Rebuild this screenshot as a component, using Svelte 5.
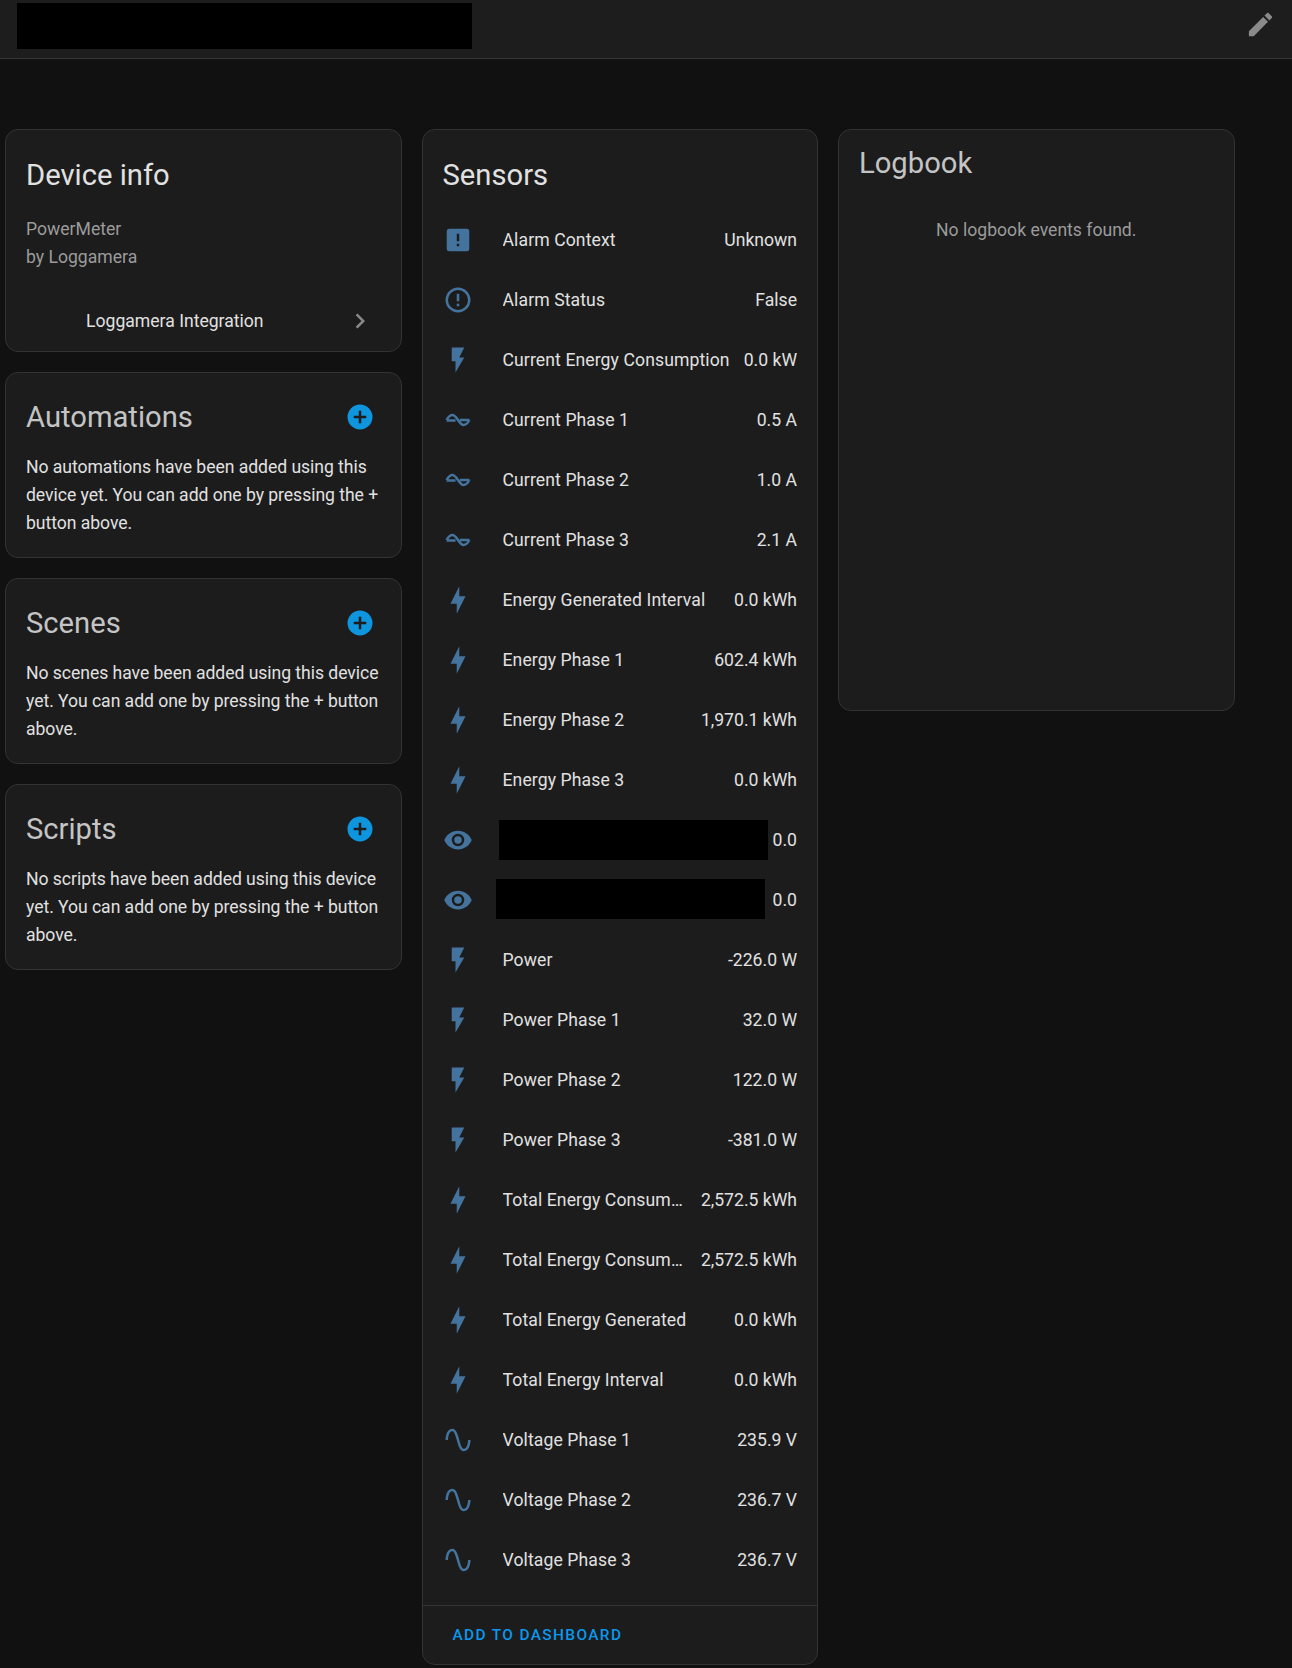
<script>
  const icons = {
    box: 'M5,3H19A2,2 0 0,1 21,5V19A2,2 0 0,1 19,21H5A2,2 0 0,1 3,19V5A2,2 0 0,1 5,3M13,13V7H11V13H13M13,17V15H11V17H13Z',
    alert: 'M11,15H13V17H11V15M11,7H13V13H11V7M12,2C6.47,2 2,6.5 2,12A10,10 0 0,0 12,22A10,10 0 0,0 22,12A10,10 0 0,0 12,2M12,20A8,8 0 0,1 4,12A8,8 0 0,1 12,4A8,8 0 0,1 20,12A8,8 0 0,1 12,20Z',
    flash: 'M7,2V13H10V22L17,10H13L17,2H7Z',
    bolt: 'M11 15H6L13 1V9H18L11 23V15Z',
    ac: 'M2.8 12C4.5 9 6 8 7.6 8C11 8 13 16 16.4 16C18 16 19.5 15 21.2 12M2.8 12.3H10M13.5 12H21.2',
    eye: 'M12,9A3,3 0 0,0 9,12A3,3 0 0,0 12,15A3,3 0 0,0 15,12A3,3 0 0,0 12,9M12,17A5,5 0 0,1 7,12A5,5 0 0,1 12,7A5,5 0 0,1 17,12A5,5 0 0,1 12,17M12,4.5C7,4.5 2.73,7.61 1,12C2.73,16.39 7,19.5 12,19.5C17,19.5 21.27,16.39 23,12C21.27,7.61 17,4.5 12,4.5Z',
    sine: 'M16.5,21C13.5,21 12.31,16.76 11.05,12.28C10.14,9.04 9,5 7.5,5C4.11,5 4,11.93 4,12H2C2,11.63 2.06,3 7.5,3C10.5,3 11.71,7.25 12.97,11.74C13.93,15.14 15,19 16.5,19C19.94,19 20.03,12.07 20.03,12H22.03C22.03,12.37 21.97,21 16.5,21Z',
    plus: 'M17,13H13V17H11V13H7V11H11V7H13V11H17M12,2A10,10 0 0,0 2,12A10,10 0 0,0 12,22A10,10 0 0,0 22,12A10,10 0 0,0 12,2Z',
    pencil: 'M20.71,7.04C21.1,6.65 21.1,6 20.71,5.63L18.37,3.29C18,2.9 17.35,2.9 16.96,3.29L15.12,5.12L18.87,8.87M3,17.25V21H6.75L17.81,9.93L14.06,6.18L3,17.25Z',
    chevron: 'M8.59,16.58L13.17,12L8.59,7.41L10,6L16,12L10,18L8.59,16.58Z'
  };

  const sensors = [
    { icon: 'box', name: 'Alarm Context', value: 'Unknown' },
    { icon: 'alert', name: 'Alarm Status', value: 'False' },
    { icon: 'flash', name: 'Current Energy Consumption', value: '0.0 kW' },
    { icon: 'ac', name: 'Current Phase 1', value: '0.5 A' },
    { icon: 'ac', name: 'Current Phase 2', value: '1.0 A' },
    { icon: 'ac', name: 'Current Phase 3', value: '2.1 A' },
    { icon: 'bolt', name: 'Energy Generated Interval', value: '0.0 kWh' },
    { icon: 'bolt', name: 'Energy Phase 1', value: '602.4 kWh' },
    { icon: 'bolt', name: 'Energy Phase 2', value: '1,970.1 kWh' },
    { icon: 'bolt', name: 'Energy Phase 3', value: '0.0 kWh' },
    { icon: 'eye', redact: 'first', value: '0.0' },
    { icon: 'eye', redact: 'second', value: '0.0' },
    { icon: 'flash', name: 'Power', value: '-226.0 W' },
    { icon: 'flash', name: 'Power Phase 1', value: '32.0 W' },
    { icon: 'flash', name: 'Power Phase 2', value: '122.0 W' },
    { icon: 'flash', name: 'Power Phase 3', value: '-381.0 W' },
    { icon: 'bolt', name: 'Total Energy Consumption Interval', value: '2,572.5 kWh' },
    { icon: 'bolt', name: 'Total Energy Consumption Total', value: '2,572.5 kWh' },
    { icon: 'bolt', name: 'Total Energy Generated', value: '0.0 kWh' },
    { icon: 'bolt', name: 'Total Energy Interval', value: '0.0 kWh' },
    { icon: 'sine', name: 'Voltage Phase 1', value: '235.9 V' },
    { icon: 'sine', name: 'Voltage Phase 2', value: '236.7 V' },
    { icon: 'sine', name: 'Voltage Phase 3', value: '236.7 V' }
  ];

  const related = [
    { title: 'Automations', text: 'No automations have been added using this device yet. You can add one by pressing the + button above.' },
    { title: 'Scenes', text: 'No scenes have been added using this device yet. You can add one by pressing the + button above.' },
    { title: 'Scripts', text: 'No scripts have been added using this device yet. You can add one by pressing the + button above.' }
  ];
</script>

<header class="toolbar">
  <div class="redacted-title"></div>
  <svg class="edit" viewBox="0 0 24 24"><path d={icons.pencil} /></svg>
</header>

<main class="columns">
  <div class="column">
    <section class="card device">
      <h2 class="bright">Device info</h2>
      <div class="model">PowerMeter</div>
      <div class="model">by Loggamera</div>
      <div class="integration">
        <span>Loggamera Integration</span>
        <svg viewBox="0 0 24 24"><path d={icons.chevron} /></svg>
      </div>
    </section>

    {#each related as item (item.title)}
      <section class="card related">
        <div class="related-head">
          <h2>{item.title}</h2>
          <svg viewBox="0 0 24 24"><path d={icons.plus} /></svg>
        </div>
        <p>{item.text}</p>
      </section>
    {/each}
  </div>

  <div class="column">
    <section class="card sensors">
      <h2 class="bright">Sensors</h2>
      <div class="rows">
        {#each sensors as row, i (i)}
          <div class="row">
            <svg class="state-icon" viewBox="0 0 24 24">
              <path class:wave={row.icon === 'ac'} d={icons[row.icon]} />
            </svg>
            {#if row.redact}
              <div class="name masked"><div class="redacted {row.redact}"></div></div>
            {:else}
              <div class="name">{row.name}</div>
            {/if}
            <div class="value" class:tight={row.redact}>{row.value}</div>
          </div>
        {/each}
      </div>
      <div class="actions">ADD TO DASHBOARD</div>
    </section>
  </div>

  <div class="column">
    <section class="card logbook">
      <h2>Logbook</h2>
      <div class="empty">No logbook events found.</div>
    </section>
  </div>
</main>

<style>
  :global(body) {
    background: #111111;
    font-family: Roboto, "Liberation Sans", sans-serif;
    color: #e1e1e1;
  }

  .toolbar {
    box-sizing: border-box;
    height: 59px;
    padding: 3px 16px 0 17px;
    display: flex;
    justify-content: space-between;
    background: #1d1d1d;
    border-bottom: 1px solid #373737;
  }

  .redacted-title {
    width: 455px;
    height: 46px;
    background: #000;
  }

  .edit {
    width: 31px;
    height: 31px;
    margin-top: 6px;
    fill: #8a8a8a;
  }

  .columns {
    display: grid;
    grid-template-columns: repeat(3, 396.5px);
    column-gap: 20px;
    padding: 70px 0 0 5px;
    align-items: start;
  }

  .column {
    display: flex;
    flex-direction: column;
    gap: 20px;
  }

  .card {
    box-sizing: border-box;
    background: #1c1c1c;
    border: 1px solid #333333;
    border-radius: 13px;
  }

  h2 {
    margin: 0;
    font-size: 29.2px;
    font-weight: 400;
    line-height: 36px;
    color: #c4c4c4;
  }

  h2.bright {
    color: #e1e1e1;
  }

  .device {
    height: 223px;
    padding: 27px 20px 0;
  }

  .device h2 {
    margin-bottom: 22px;
  }

  .model {
    font-size: 17.6px;
    line-height: 28px;
    color: #9b9b9b;
  }

  .integration {
    display: flex;
    align-items: center;
    justify-content: space-between;
    margin-top: 35px;
    padding: 0 6px 0 60px;
    font-size: 17.6px;
    line-height: 30px;
    color: #e1e1e1;
  }

  .integration svg {
    width: 30px;
    height: 30px;
    fill: #8a8a8a;
  }

  .related {
    height: 186px;
    padding: 26px 20px 0;
  }

  .related-head {
    display: flex;
    align-items: center;
    justify-content: space-between;
    padding-right: 6px;
  }

  .related-head svg {
    width: 30px;
    height: 30px;
    fill: #0f95dd;
  }

  .related p {
    margin: 18px 0 0;
    font-size: 17.6px;
    line-height: 28px;
    letter-spacing: -0.05px;
    color: #e1e1e1;
  }

  .sensors h2 {
    padding: 27px 20px 17px;
  }

  .rows {
    padding-bottom: 15px;
  }

  .row {
    display: flex;
    align-items: center;
    height: 60px;
    padding: 0 20px;
    font-size: 17.6px;
  }

  .state-icon {
    width: 30px;
    height: 30px;
    flex: none;
    margin-right: 30px;
    fill: #44739e;
  }

  .wave {
    fill: none;
    stroke: #44739e;
    stroke-width: 2;
  }

  .name {
    flex: 1;
    min-width: 0;
    overflow: hidden;
    white-space: nowrap;
    text-overflow: ellipsis;
    letter-spacing: 0.1px;
    color: #e1e1e1;
  }

  .name.masked {
    overflow: visible;
  }

  .value {
    flex: none;
    margin-left: 12px;
    text-align: right;
    color: #e1e1e1;
  }

  .value.tight {
    margin-left: 6px;
  }

  .redacted {
    height: 40px;
    background: #000;
  }

  .redacted.first {
    width: 268.6px;
    margin-left: -3.5px;
  }

  .redacted.second {
    width: 269.7px;
    margin-top: -2px;
    margin-left: -7px;
  }

  .actions {
    height: 58px;
    padding-left: 30px;
    border-top: 1px solid #333333;
    font-size: 15.4px;
    font-weight: 500;
    letter-spacing: 1.375px;
    line-height: 58px;
    color: #0a98ee;
  }

  .logbook {
    height: 582px;
    padding: 15px 20px 0;
  }

  .empty {
    margin-top: 35px;
    text-align: center;
    font-size: 17.6px;
    line-height: 28px;
    color: #9b9b9b;
  }
</style>
